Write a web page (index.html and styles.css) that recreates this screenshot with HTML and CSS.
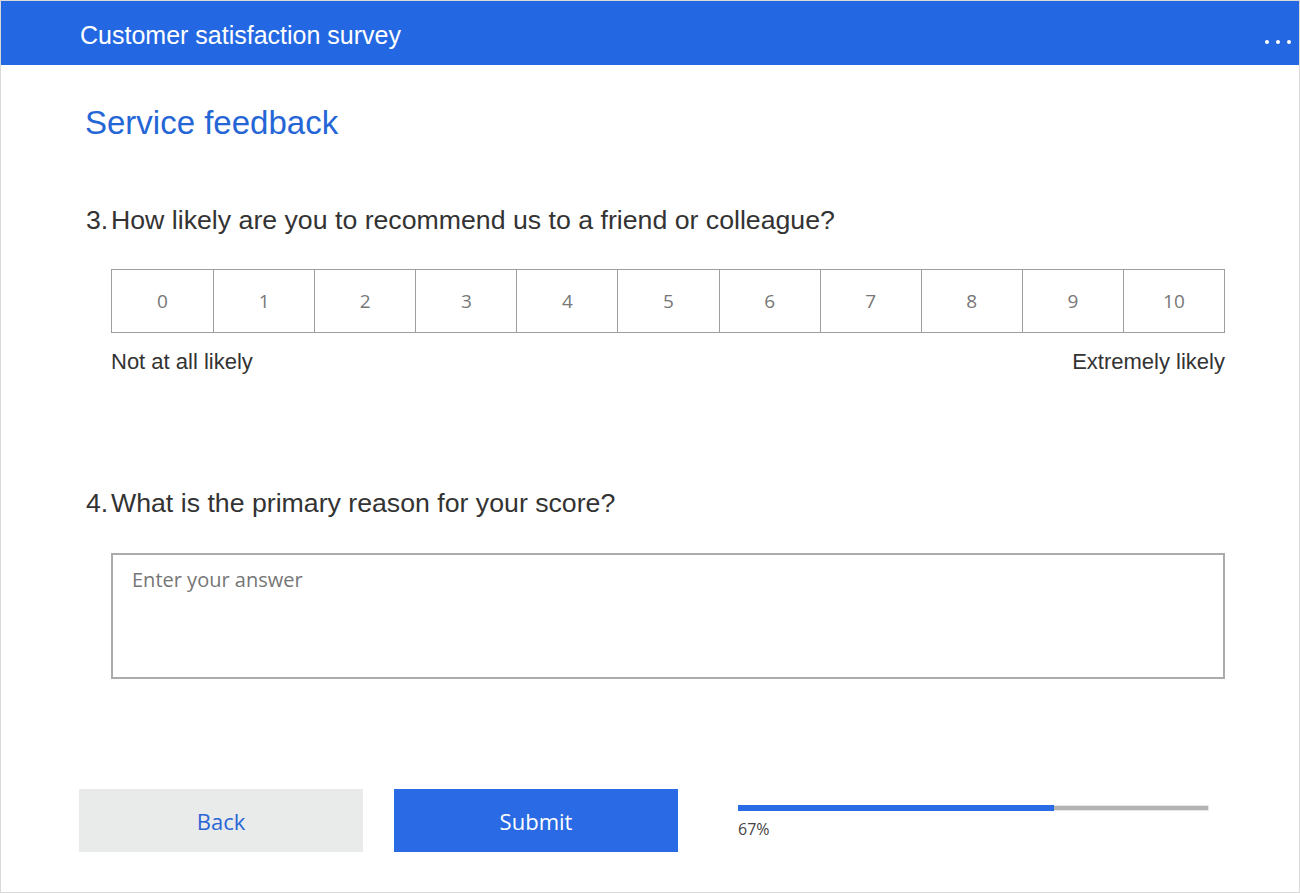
FILE: index.html
```
<!DOCTYPE html>
<html lang="en">
<head>
<meta charset="utf-8">
<title>Customer satisfaction survey</title>
<link rel="stylesheet" href="styles.css">
</head>
<body>
<div class="frame">
  <header class="topbar">
    <span class="topbar-title">Customer satisfaction survey</span>
    <span class="dots"><i></i><i></i><i></i></span>
  </header>
  <main class="content">
    <h1 class="section-title">Service feedback</h1>

    <div class="question q3">
      <span class="qnum">3.</span><span class="qtext">How likely are you to recommend us to a friend or colleague?</span>
    </div>
    <div class="scale">
      <div class="cell">0</div>
      <div class="cell">1</div>
      <div class="cell">2</div>
      <div class="cell">3</div>
      <div class="cell">4</div>
      <div class="cell">5</div>
      <div class="cell">6</div>
      <div class="cell">7</div>
      <div class="cell">8</div>
      <div class="cell">9</div>
      <div class="cell">10</div>
    </div>
    <div class="scale-labels">
      <span>Not at all likely</span>
      <span>Extremely likely</span>
    </div>

    <div class="question q4">
      <span class="qnum">4.</span><span class="qtext">What is the primary reason for your score?</span>
    </div>
    <div class="answer">Enter your answer</div>

    <div class="footer">
      <button class="btn btn-back">Back</button>
      <button class="btn btn-submit">Submit</button>
      <div class="progress">
        <div class="track"><div class="fill"></div></div>
        <div class="pct">67%</div>
      </div>
    </div>
  </main>
</div>
</body>
</html>
```

FILE: styles.css
```
* { box-sizing: border-box; }
html, body { margin: 0; padding: 0; background: #ffffff; }
body { font-family: "Liberation Sans", Arial, sans-serif; }

.frame {
  width: 1300px;
  height: 893px;
  border: 1px solid #d9d9d9;
  display: flex;
  flex-direction: column;
  overflow: hidden;
}

.topbar {
  height: 64px;
  flex: none;
  background: #2368e2;
  color: #ffffff;
  display: flex;
  align-items: center;
  justify-content: space-between;
  padding: 0 8px 0 79px;
}
.topbar-title { font-size: 25px; line-height: 30px; margin-top: 3px; }
.dots { display: flex; gap: 7px; margin-top: 18px; }
.dots i { display: block; width: 4px; height: 4px; border-radius: 50%; background: #fff; }

.content {
  flex: 1;
  display: flex;
  flex-direction: column;
  padding: 38px 0 0 84px;
}

.section-title {
  margin: 0;
  font-weight: normal;
  font-size: 33px;
  line-height: 40px;
  color: #2566d6;
}

.question {
  display: flex;
  font-size: 26.7px;
  line-height: 32px;
  color: #333333;
  margin-left: 1px;
}
.qnum { width: 25px; }
.q3 { margin-top: 61px; }
.q4 { margin-top: 110px; }

.scale {
  margin: 33px 0 0 26px;
  width: 1114px;
  height: 64px;
  display: grid;
  grid-template-columns: repeat(11, 1fr);
  border: 1px solid #9e9e9e;
}
.cell {
  display: flex;
  align-items: center;
  justify-content: center;
  border-left: 1px solid #9e9e9e;
  font-family: "Open Sans", sans-serif;
  font-size: 19px;
  color: #777777;
}
.cell:first-child { border-left: none; }

.scale-labels {
  margin: 14px 0 0 26px;
  width: 1114px;
  display: flex;
  justify-content: space-between;
  font-size: 22px;
  line-height: 30px;
  color: #333333;
}

.answer {
  margin: 34px 0 0 26px;
  width: 1114px;
  height: 126px;
  border: 2px solid #ababab;
  padding: 11px 19px;
  font-family: "Open Sans", sans-serif;
  font-size: 20px;
  line-height: 28px;
  color: #767676;
}

.footer {
  margin-top: 110px;
  margin-left: -6px;
  display: flex;
  align-items: flex-start;
}
.btn {
  width: 284px;
  height: 63px;
  border: none;
  font-family: "Open Sans", sans-serif;
  font-size: 22px;
  padding: 0;
}
.btn-back { background: #e9eaea; color: #2a66d6; }
.btn-submit { background: #2a6ae4; color: #ffffff; margin-left: 31px; }

.progress { margin: 16px 0 0 60px; width: 471px; }
.track {
  height: 6px;
  background: #b3b3b3;
  border: 1px solid #e6e6e6;
}
.fill { width: 67.4%; height: 6px; margin: -1px 0 0 -1px; background: #2a6ae4; }
.pct {
  margin-top: 8px;
  font-family: "Open Sans", sans-serif;
  font-size: 16px;
  line-height: 20px;
  color: #444444;
}
```
